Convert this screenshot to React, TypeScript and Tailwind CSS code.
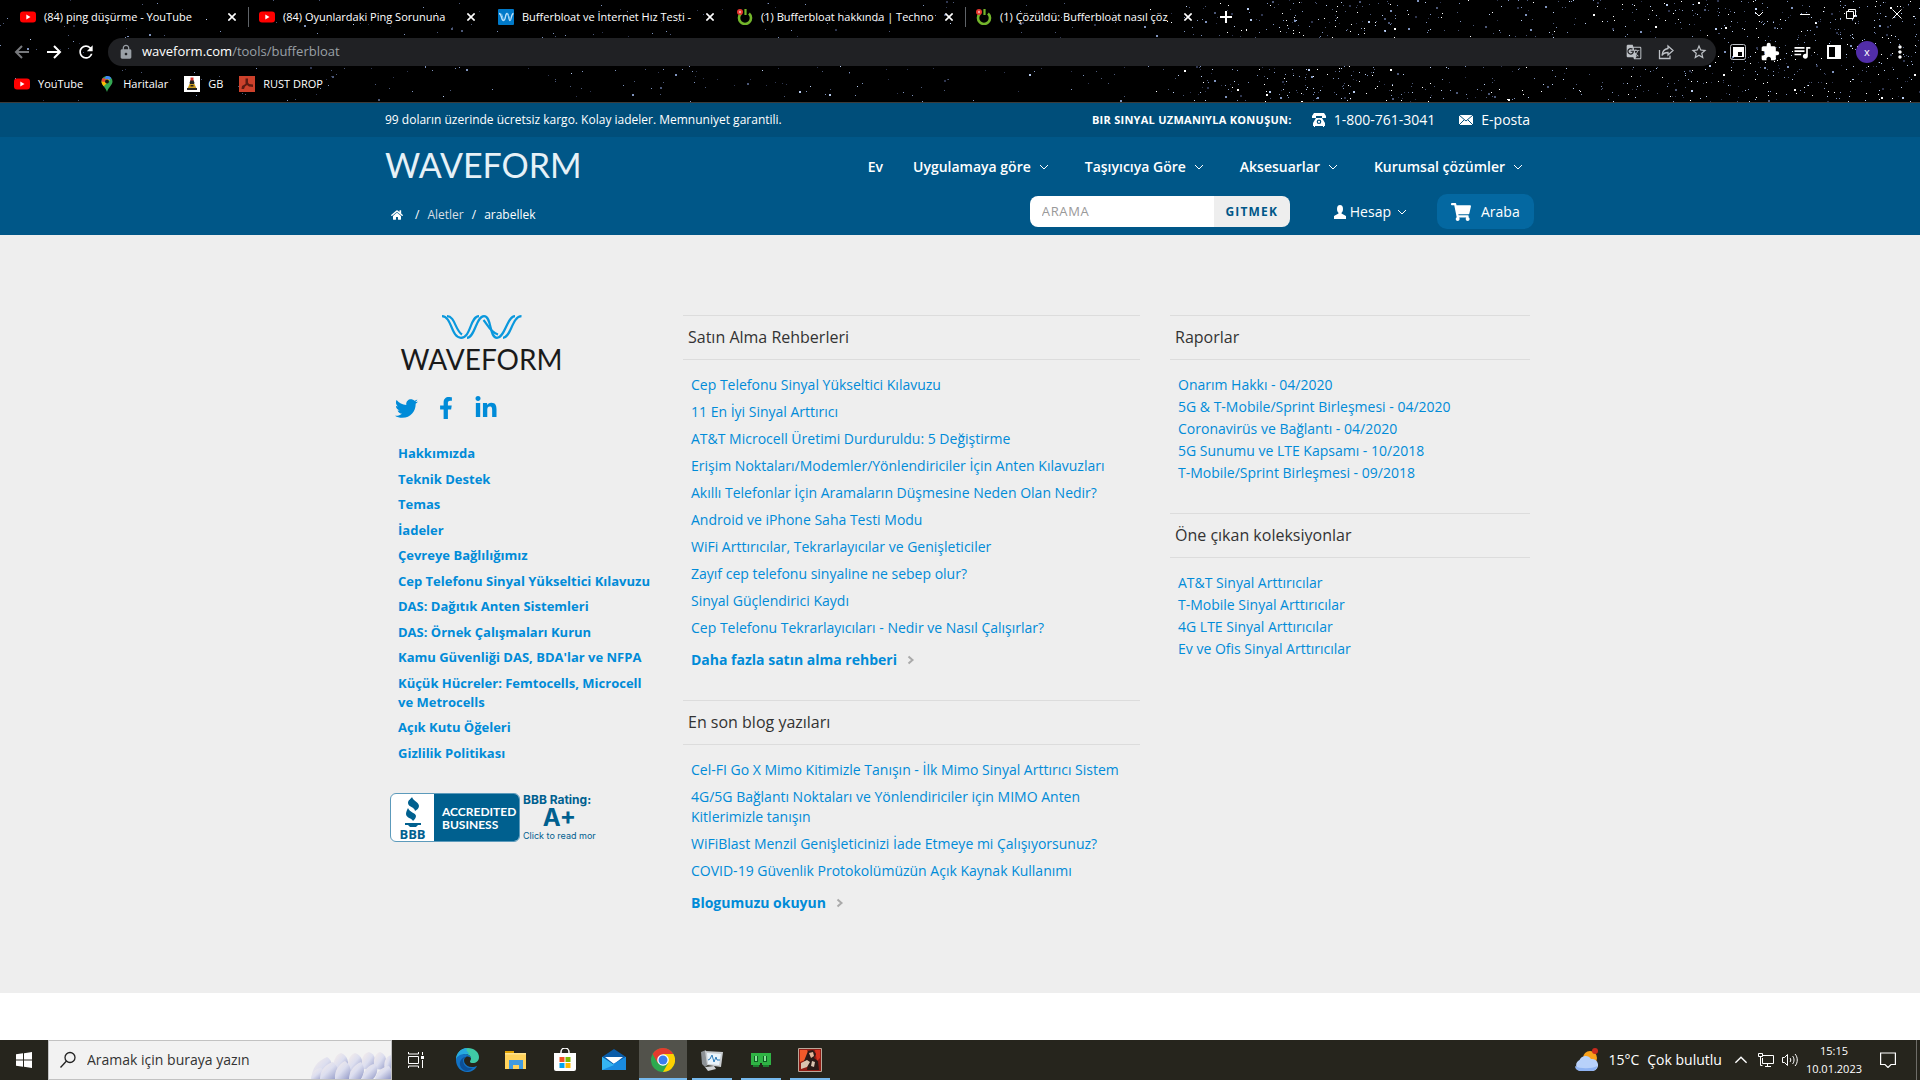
import type { ReactNode } from "react";
import clsx from "clsx";
import { FaFacebookF, FaHome, FaLinkedinIn, FaShoppingCart, FaTwitter } from "react-icons/fa";
import { MdExtension, MdGTranslate, MdLock, MdMoreVert, MdQueueMusic, MdRefresh, MdStarBorder } from "react-icons/md";

type TabIcon = "youtube" | "waveform" | "techno";

const tabs: { title: string; icon: TabIcon; divider?: boolean }[] = [
  { title: "(84) ping düşürme - YouTube", icon: "youtube", divider: true },
  { title: "(84) Oyunlardaki Ping Sorununa", icon: "youtube" },
  { title: "Bufferbloat ve İnternet Hız Testi -", icon: "waveform" },
  { title: "(1) Bufferbloat hakkında | Techno", icon: "techno", divider: true },
  { title: "(1) Çözüldü: Bufferbloat nasıl çöz", icon: "techno" },
];

const navItems = ["Uygulamaya göre", "Taşıyıcıya Göre", "Aksesuarlar", "Kurumsal çözümler"];

const companyLinks = [
  "Hakkımızda",
  "Teknik Destek",
  "Temas",
  "İadeler",
  "Çevreye Bağlılığımız",
  "Cep Telefonu Sinyal Yükseltici Kılavuzu",
  "DAS: Dağıtık Anten Sistemleri",
  "DAS: Örnek Çalışmaları Kurun",
  "Kamu Güvenliği DAS, BDA'lar ve NFPA",
  "Küçük Hücreler: Femtocells, Microcell ve Metrocells",
  "Açık Kutu Öğeleri",
  "Gizlilik Politikası",
];

const guideLinks = [
  "Cep Telefonu Sinyal Yükseltici Kılavuzu",
  "11 En İyi Sinyal Arttırıcı",
  "AT&T Microcell Üretimi Durduruldu: 5 Değiştirme",
  "Erişim Noktaları/Modemler/Yönlendiriciler İçin Anten Kılavuzları",
  "Akıllı Telefonlar İçin Aramaların Düşmesine Neden Olan Nedir?",
  "Android ve iPhone Saha Testi Modu",
  "WiFi Arttırıcılar, Tekrarlayıcılar ve Genişleticiler",
  "Zayıf cep telefonu sinyaline ne sebep olur?",
  "Sinyal Güçlendirici Kaydı",
  "Cep Telefonu Tekrarlayıcıları - Nedir ve Nasıl Çalışırlar?",
];

const blogLinks = [
  "Cel-FI Go X Mimo Kitimizle Tanışın - İlk Mimo Sinyal Arttırıcı Sistem",
  "4G/5G Bağlantı Noktaları ve Yönlendiriciler için MIMO Anten Kitlerimizle tanışın",
  "WiFiBlast Menzil Genişleticinizi İade Etmeye mi Çalışıyorsunuz?",
  "COVID-19 Güvenlik Protokolümüzün Açık Kaynak Kullanımı",
];

const reportLinks = [
  "Onarım Hakkı - 04/2020",
  "5G & T-Mobile/Sprint Birleşmesi - 04/2020",
  "Coronavirüs ve Bağlantı - 04/2020",
  "5G Sunumu ve LTE Kapsamı - 10/2018",
  "T-Mobile/Sprint Birleşmesi - 09/2018",
];

const collectionLinks = [
  "AT&T Sinyal Arttırıcılar",
  "T-Mobile Sinyal Arttırıcılar",
  "4G LTE Sinyal Arttırıcılar",
  "Ev ve Ofis Sinyal Arttırıcılar",
];

export default function App() {
  return (
    <div className="flex min-h-screen flex-col bg-white font-['Open_Sans',sans-serif]">
      <BrowserChrome />
      <SiteHeader />
      <SiteFooter />
      <div className="flex-1 bg-white" />
      <Taskbar />
    </div>
  );
}

// Browser window

// Seeded so the sky is the same on every render
function makeStars() {
  let seed = 7;
  const rand = () => {
    seed = (seed * 16807) % 2147483647;
    return seed / 2147483647;
  };
  const colors = ["#ffffff", "#b9cdf0", "#7f93bd", "#4c5878", "#2f3650"];
  const stars: { x: number; y: number; size: number; color: string }[] = [];
  for (let i = 0; i < 1500; i++) {
    const zone = rand();
    let x = rand() * 1920;
    if (zone > 0.4 && zone < 0.75) x = 1180 + rand() * 740;
    if (zone >= 0.75 && zone < 0.87) x = 1330 + (rand() + rand() + rand() - 1.5) * 110;
    if (zone >= 0.87) x = 1640 + rand() * 280;
    const bright = rand();
    const color = colors[Math.min(4, Math.floor(5 * (x < 1150 ? 0.35 + bright * 0.65 : bright)))];
    stars.push({ x: Math.floor(x), y: Math.floor(rand() * 102), size: rand() > 0.9 ? 2 : 1, color });
  }
  return stars;
}

const stars = makeStars();

function BrowserChrome() {
  return (
    <header className="relative border-b border-[#3c3b39] bg-black text-[11px] text-white">
      <svg className="absolute inset-0 h-full w-full" viewBox="0 0 1920 102" preserveAspectRatio="xMidYMid slice" aria-hidden="true">
        {stars.map((s, i) => (
          <rect key={i} x={s.x} y={s.y} width={s.size} height={s.size} fill={s.color} />
        ))}
      </svg>
      <div className="relative">
        <div className="flex h-[38px] items-start justify-between pl-5">
          <div className="flex h-[34px] items-center">
            {tabs.map((tab) => (
              <div key={tab.title} className="flex w-[239px] items-center pr-2.5">
                <Favicon icon={tab.icon} />
                <span className="ml-2 flex-1 whitespace-nowrap">{tab.title}</span>
                <button aria-label="Sekmeyi kapat" className="flex w-4 justify-center">
                  <Cross className="h-2 w-2" width={2} />
                </button>
                <span className={clsx("ml-2 h-5 w-px", tab.divider ? "bg-[#5f6368]" : "bg-transparent")} />
              </div>
            ))}
            <button aria-label="Yeni sekme" className="ml-1">
              <svg className="h-3.5 w-3.5" viewBox="0 0 14 14" stroke="currentColor" strokeWidth="2">
                <path d="M7 1v12M1 7h12" />
              </svg>
            </button>
          </div>
          <div className="flex h-7 items-center">
            <button aria-label="Sekmelerde ara" className="flex w-[46px] justify-center">
              <Chevron className="h-2.5 w-2.5" />
            </button>
            <button aria-label="Küçült" className="flex w-[46px] justify-center">
              <span className="h-px w-2.5 bg-white" />
            </button>
            <button aria-label="Geri yükle" className="flex w-[46px] justify-center">
              <svg className="h-2.5 w-2.5" viewBox="0 0 10 10" fill="none" stroke="currentColor">
                <path d="M.5 2.5h7v7h-7zM2.5 2.5v-2h7v7h-2" />
              </svg>
            </button>
            <button aria-label="Kapat" className="flex w-[46px] justify-center">
              <Cross className="h-2.5 w-2.5" width={1} />
            </button>
          </div>
        </div>

        <div className="flex h-7 items-center pr-2.5 pl-3">
          <div className="flex items-center gap-3">
            <button aria-label="Geri" className="text-[#77797c]">
              <Arrow className="h-5 w-5 rotate-180" />
            </button>
            <button aria-label="İleri">
              <Arrow className="h-5 w-5" />
            </button>
            <button aria-label="Yenile">
              <MdRefresh className="h-5 w-5" />
            </button>
          </div>
          <div className="ml-3 flex h-7 flex-1 items-center rounded-full bg-[#202124] pr-2 pl-2.5 text-[#9aa0a6]">
            <MdLock className="h-4 w-4" />
            <p className="ml-2 text-[13px]">
              <span className="text-white">waveform.com</span>/tools/bufferbloat
            </p>
            <div className="ml-auto flex items-center gap-4 text-[#bdc1c6]">
              <MdGTranslate className="h-4 w-4" />
              <svg className="h-4 w-4" viewBox="0 0 16 16" fill="none" stroke="currentColor" strokeWidth="1.3">
                <path d="M1.5 6v8.500h10.500v-3M10 2l5 4.500-5 4.500V8.500c-3 0-5 1-6 3 .3-4 2.500-6.500 6-7z" />
              </svg>
              <MdStarBorder className="h-[18px] w-[18px]" />
            </div>
          </div>
          <div className="ml-3 flex items-center gap-3">
            <svg className="h-5 w-5" viewBox="0 0 20 20" fill="none" stroke="currentColor">
              <rect x="2.500" y="2.500" width="15" height="15" rx="2" stroke="#bdc1c6" />
              <path d="M5 5h11v10H5zM10 10v4h4v-4z" fill="white" fillRule="evenodd" stroke="none" />
            </svg>
            <MdExtension className="h-5 w-5" />
            <MdQueueMusic className="h-5 w-5" />
            <svg className="h-5 w-5" viewBox="0 0 20 20" fill="currentColor">
              <path fillRule="evenodd" d="M3 3h14v14H3zM5 5v10h6V5z" />
            </svg>
            <span className="flex h-[22px] w-[22px] items-center justify-center rounded-full bg-[#512da8]">x</span>
            <MdMoreVert className="h-5 w-5" />
          </div>
        </div>

        <nav className="flex h-9 items-center pl-3.5">
          <Bookmark label="YouTube"><Favicon icon="youtube" /></Bookmark>
          <Bookmark label="Haritalar">
            <svg className="h-4 w-4" viewBox="0 0 16 16">
              <path d="M8 0a5.500 5.500 0 0 1 5.500 5.500C13.500 9 9.500 11 8 16 6.500 11 2.500 9 2.500 5.500A5.500 5.500 0 0 1 8 0z" fill="#34a853" />
              <path d="M12.300 2a5.500 5.500 0 0 0-5.300-1.900L5 4l3 3z" fill="#4285f4" />
              <path d="M2.500 5.500c0 2 1 3.300 2.200 4.700L11 4 8 3z" fill="#fbbc04" />
              <path d="M3.700 2A5.500 5.500 0 0 0 2.500 5.500L6 6l1-3z" fill="#ea4335" />
              <circle cx="8" cy="5.500" r="2" fill="#111" />
            </svg>
          </Bookmark>
          <Bookmark label="GB">
            <svg className="h-4 w-4" viewBox="0 0 16 16">
              <path d="M0 0h16v16H0z" fill="#fff" />
              <path d="M6.500 4h3l1 3-1 2h-3l-1-2z" fill="#222" />
              <path d="M6.500 1.500h3v3h-3z" fill="#d6332c" />
              <path d="M5.500 8h5l2 4.500h-9z" fill="#c99a1e" />
              <path d="M3 12h10v2H3zM6.500 9h3v1.500h-3z" fill="#222" />
            </svg>
          </Bookmark>
          <Bookmark label="RUST DROP">
            <svg className="h-4 w-4" viewBox="0 0 16 16">
              <path d="M0 0h16v16H0z" fill="#cd412b" />
              <path d="M6.500 2.500h2.500v4l1 1.500 4 .5v2.500l-4-.5-2-1.500-2 1.500-1 2.500H2.500l.5-3 3.500-2z" fill="#5c1a12" />
            </svg>
          </Bookmark>
        </nav>
      </div>
    </header>
  );
}

function Bookmark({ label, children }: { label: string; children: ReactNode }) {
  return (
    <a href="#" className="mr-4 flex items-center gap-2">
      {children}
      {label}
    </a>
  );
}

function Favicon({ icon }: { icon: TabIcon }) {
  if (icon === "youtube") {
    return (
      <svg className="h-4 w-4 shrink-0" viewBox="0 0 16 16">
        <rect y="2.500" width="16" height="11" rx="3" fill="#f00" />
        <path d="M6.300 5.500v5l4.200-2.500z" fill="#fff" />
      </svg>
    );
  }
  if (icon === "waveform") {
    return (
      <svg className="h-4 w-4 shrink-0" viewBox="0 0 16 16" fill="none">
        <rect width="16" height="16" rx="1" fill="#0079c8" />
        <path d="M1 4.500c3 0 2 7 4.500 7S7 4.500 9 4.500s1.500 7 3 7 1-7 3.500-7" stroke="#bfe3fa" strokeWidth="1.300" />
        <path d="M2.500 4.500c2.500 0 2 7 4 7M9 4.500c2 0 2 7 4 6" stroke="#7cc4f0" />
      </svg>
    );
  }
  return (
    <svg className="h-4 w-4 shrink-0" viewBox="0 0 16 16" fill="none">
      <path d="M4 4.500a6 6 0 1 0 8 0" stroke="#73b52b" strokeWidth="2.600" />
      <path d="M8.500 0v6" stroke="#73b52b" strokeWidth="2.200" />
      <circle cx="3" cy="3" r="3" fill="#e8352e" />
      <circle cx="3" cy="3" r="1.200" fill="#f5a29d" />
    </svg>
  );
}

function Cross({ className, width }: { className: string; width: number }) {
  return (
    <svg className={className} viewBox="0 0 10 10" stroke="currentColor" strokeWidth={width}>
      <path d="M.5.5l9 9M9.500.5l-9 9" />
    </svg>
  );
}

function Arrow({ className }: { className: string }) {
  return (
    <svg className={className} viewBox="0 0 20 20" fill="none" stroke="currentColor" strokeWidth="2">
      <path d="M3 10h13M10 4l6 6-6 6" />
    </svg>
  );
}

function Chevron({ className }: { className: string }) {
  return (
    <svg className={className} viewBox="0 0 10 10" fill="none" stroke="currentColor">
      <path d="M1 3l4 4 4-4" />
    </svg>
  );
}

// Site

function SiteHeader() {
  return (
    <header className="bg-[#005788] text-white">
      <div className="bg-[#004e7a]">
        <div className="mx-auto flex h-[34px] max-w-[1150px] items-center justify-between pr-[5px]">
          <p className="text-xs">99 doların üzerinde ücretsiz kargo. Kolay iadeler. Memnuniyet garantili.</p>
          <div className="flex items-center text-sm">
            <span className="text-[11px] font-bold tracking-wide">BIR SINYAL UZMANIYLA KONUŞUN:</span>
            <a href="#" className="ml-5 flex items-center gap-2">
              <svg className="h-3.5 w-3.5" viewBox="0 0 14 14" fill="currentColor">
                <path d="M2 0h10l2 3v2h-4V3H4v2H0V3z" />
                <path fillRule="evenodd" d="M4 5h6l3 5v3h-1v1h-1v-1H3v1H2v-1H1v-3zM7 6.500a2.300 2.300 0 1 0 0 4.600 2.300 2.300 0 0 0 0-4.600zm0 1.200a1.100 1.100 0 1 1 0 2.200 1.100 1.100 0 0 1 0-2.200z" />
              </svg>
              1-800-761-3041
            </a>
            <a href="#" className="ml-6 flex items-center gap-2">
              <svg className="h-3 w-3.5" viewBox="0 0 14 12">
                <path d="M0 1h14v10H0z" fill="currentColor" />
                <path d="M0 1l7 6 7-6M0 11l5-5M14 11L9 6" fill="none" stroke="#004e7a" />
              </svg>
              E-posta
            </a>
          </div>
        </div>
      </div>

      <div className="mx-auto max-w-[1150px]">
        <div className="flex h-14 items-center justify-between pr-1.5">
          <a href="#" className="font-['Lato',sans-serif] text-[34px] leading-10 text-[#e6f1f7]">WAVEFORM</a>
          <nav className="flex items-center gap-[30px] pt-1 text-sm font-semibold">
            <a href="#">Ev</a>
            {navItems.map((item) => (
              <a key={item} href="#" className="flex items-center gap-2 pr-1.5">
                {item}
                <Chevron className="h-2.5 w-2.5" />
              </a>
            ))}
          </nav>
        </div>

        <div className="flex h-[42px] items-center justify-between pr-px pb-[5px]">
          <nav className="flex items-center gap-2 pt-1.5 pl-1.5 text-xs">
            <a href="#" aria-label="Ana sayfa" className="mr-1"><FaHome className="h-3 w-3" /></a>
            <span>/</span>
            <a href="#" className="text-[#d9dfe4]">Aletler</a>
            <span>/</span>
            <span>arabellek</span>
          </nav>
          <div className="flex items-center text-sm">
            <form className="flex h-[31px] w-[260px] overflow-hidden rounded-lg">
              <input
                type="text"
                aria-label="Arama"
                placeholder="ARAMA"
                className="w-[184px] bg-white pl-3 text-[13px] tracking-wider text-[#333] placeholder:text-[#999]"
              />
              <button type="button" className="flex-1 bg-[#eee] text-xs font-bold tracking-widest text-[#005788]">
                GITMEK
              </button>
            </form>
            <a href="#" className="ml-11 flex items-center gap-1">
              <svg className="h-3.5 w-3" viewBox="0 0 12 14" fill="currentColor">
                <ellipse cx="6" cy="4" rx="3" ry="4" />
                <path d="M4.500 7h3v1.500L12 11v3H0v-3l4.500-2.500z" />
              </svg>
              Hesap
              <Chevron className="ml-0.5 h-2.5 w-2.5" />
            </a>
            <a href="#" className="ml-[30px] flex h-[35px] w-[97px] items-center gap-2.5 rounded-[10px] bg-[#0468a1] pl-3.5">
              <FaShoppingCart className="h-5 w-5" />
              Araba
            </a>
          </div>
        </div>
      </div>
    </header>
  );
}

function SiteFooter() {
  return (
    <footer className="bg-[#eee] text-[#008bd8]">
      <div className="mx-auto flex min-h-[758px] max-w-[1150px] pt-20 pr-[5px]">
        <div className="w-[298px] shrink-0">
          <div className="flex w-[193px] flex-col items-center">
            <svg className="h-[24px] w-[80px]" viewBox="0 0 80 24" fill="none" stroke="#0a98dd" strokeWidth="2.200">
              <path d="M0 1.200C10 1.200 9 22.800 19 22.800S28 1.200 37 1.200" />
              <path d="M5 1.200C13 1.200 13 15 20 19.500" />
              <path d="M25 22.800C33 22.800 34 1.200 42 1.200S47 22.800 55 22.800 65 1.200 73 1.200" />
              <path d="M41.500 5C46 10 48 17 56 19.500" />
              <path d="M61 22.800C69 22.800 70 1.200 79.500 1.200" />
            </svg>
            <span className="mt-0.5 font-['Lato',sans-serif] text-[28px] leading-9 text-[#1a1a1a]">WAVEFORM</span>
          </div>
          <div className="mt-[19px] flex items-center pl-2.5">
            <a href="#" aria-label="Twitter"><FaTwitter className="h-[23px] w-[23px]" /></a>
            <a href="#" aria-label="Facebook" className="ml-[18px]"><FaFacebookF className="h-[22px] w-5" /></a>
            <a href="#" aria-label="LinkedIn" className="ml-[18px]"><FaLinkedinIn className="h-6 w-6" /></a>
          </div>
          <ul className="mt-6 flex h-[319px] flex-col justify-between pr-7 pl-[13px] text-[13px] leading-[19px] font-bold">
            {companyLinks.map((link) => (
              <li key={link}><a href="#">{link}</a></li>
            ))}
          </ul>
          <BbbSeal />
        </div>

        <div className="w-[457px] shrink-0">
          <LinkSection title="Satın Alma Rehberleri" links={guideLinks} more="Daha fazla satın alma rehberi" />
          <LinkSection title="En son blog yazıları" links={blogLinks} more="Blogumuzu okuyun" />
        </div>

        <div className="ml-[30px] flex-1">
          <LinkSection title="Raporlar" links={reportLinks} compact />
          <LinkSection title="Öne çıkan koleksiyonlar" links={collectionLinks} compact />
        </div>
      </div>
    </footer>
  );
}

interface LinkSectionProps {
  title: string;
  links: string[];
  more?: string;
  compact?: boolean;
}

function LinkSection({ title, links, more, compact }: LinkSectionProps) {
  return (
    <section className="mb-[30px] text-sm leading-5">
      <h3 className="flex h-[45px] items-center border-y border-[#dcdcdc] pb-0.5 pl-[5px] text-base text-[#333]">{title}</h3>
      <ul className={clsx("flex flex-col pt-[15px] pl-2", compact ? "gap-0.5" : "gap-[7px]")}>
        {links.map((link) => (
          <li key={link}><a href="#">{link}</a></li>
        ))}
      </ul>
      {more && (
        <a href="#" className="mt-3 flex items-center gap-2.5 pl-2 font-bold">
          {more}
          <svg className="h-2.5 w-2" viewBox="0 0 8 10" fill="none" stroke="#aaa" strokeWidth="2">
            <path d="M1.500 1.500L5.500 5l-4 3.500" />
          </svg>
        </a>
      )}
    </section>
  );
}

function BbbSeal() {
  return (
    <a href="#" className="mt-[30px] flex pl-[5px] text-[#00608f]">
      <div className="flex h-[49px] w-[130px] overflow-hidden rounded-md border border-[#5c9abb] bg-white">
        <div className="flex w-[43px] flex-col items-center pt-[3px]">
          <svg className="h-[31px] w-[18px]" viewBox="0 0 18 31" fill="currentColor">
            <path d="M8 0c1 4 7 5 7 9 0 2-2 4-4 5 0-4-7-4-7-8 0-3 3-4 4-6zM4 11c1 4 8 5 8 8 0 2-2 4-3 5-1-3-7-3-7-7 0-2 1-4 2-6z" />
            <path d="M1 26h16v2h-3l-2 2H6l-2-2H1z" />
          </svg>
          <span className="text-[13px] leading-[13px] font-bold">BBB</span>
        </div>
        <div className="flex-1 bg-[#00608f] pt-[11px] pl-2 font-['Lato',sans-serif] text-xs leading-[13px] font-bold text-white">
          ACCREDITED<br />BUSINESS
        </div>
      </div>
      <div className="ml-[3px] font-['Inter',sans-serif]">
        <p className="text-xs leading-[14px] font-bold whitespace-nowrap">BBB Rating:</p>
        <p className="text-center text-2xl leading-[22px] font-bold">A+</p>
        <p className="text-[9px] leading-[13px] whitespace-nowrap">Click to read mor</p>
      </div>
    </a>
  );
}

// Windows taskbar

function Taskbar() {
  return (
    <footer className="flex h-10 items-center justify-between bg-[#26251d] text-white">
      <div className="flex h-10 items-center">
        <button aria-label="Başlat" className="flex h-10 w-12 items-center justify-center">
          <svg className="h-4 w-4" viewBox="0 0 16 16" fill="currentColor">
            <path d="M0 2.300l7-1v6.200H0zM8 1.200L16 0v7.500H8zM0 8.500h7v6.200l-7-1zM8 8.500h8V16l-8-1.200z" />
          </svg>
        </button>
        <label className="relative flex h-10 w-[344px] items-center border border-[#c2c2c2] bg-[#f2f2f2] pl-2.5 text-[#222]">
          <svg className="h-[18px] w-[18px]" viewBox="0 0 18 18" fill="none" stroke="currentColor" strokeWidth="1.300">
            <circle cx="11" cy="6.500" r="5" />
            <path d="M7.500 10L1.500 16.500" />
          </svg>
          <input
            type="text"
            placeholder="Aramak için buraya yazın"
            className="ml-2.5 w-[220px] bg-transparent text-sm placeholder:text-[#333]"
          />
          <FlowerArt />
        </label>
        <TaskButton label="Görev görünümü">
          <svg className="h-[18px] w-[18px]" viewBox="0 0 18 18" fill="none" stroke="currentColor">
            <path d="M1.500 5.500h10v7h-10zM1.500 1v2h10V1M1.500 17v-2h10v2M15.500 1v3M15.500 9v8" />
            <path d="M14 5h3v3h-3z" fill="currentColor" stroke="none" />
          </svg>
        </TaskButton>
        <div className="ml-0.5 flex">
          <TaskButton label="Edge">
            <svg className="h-6 w-6" viewBox="0 0 24 24">
              <path d="M1 12C1 5 6 0 13 0c6 0 11 4 11 9 0 4-3 6-6 6-2 0-3-.5-3-1.500 0-.8 1-1.200 1-3C16 8 13 6 10 6 5 6 1 9 1 12z" fill="#3fc9a5" />
              <path d="M1 12C1 5 6 0 12 0c-2 3 2 4 2 6-5-1-9 1-9 6z" fill="#27a9e1" />
              <path d="M1 12c0-3 4-6 9-6 3 0 6 2 6 4.500-1-1.500-3-2.500-5-1.500-4 2-2 10 6 10 2 0 4-.5 5-1-2 4-6 6-10 6C6 24 1 19 1 12z" fill="#1272c4" />
              <path d="M8 12c0 6 5 9 10 8-2 2-4 3-7 3-4-1-7-5-6-9 1-3 3-5 6-5-2 1-3 2-3 3z" fill="#0c4f97" />
            </svg>
          </TaskButton>
          <TaskButton label="Dosya Gezgini">
            <svg className="h-6 w-6" viewBox="0 0 24 24">
              <path d="M1 3h9v3H1z" fill="#e0a100" />
              <path d="M1 5h21v16H1z" fill="#ffd35c" />
              <path d="M1 5h21v1.500H1z" fill="#ffe38f" />
              <path d="M5 12h14v9h-4v-4H9v4H5z" fill="#3f9ae0" />
            </svg>
          </TaskButton>
          <TaskButton label="Microsoft Store">
            <svg className="h-6 w-6" viewBox="0 0 24 24">
              <path d="M8 6V4a4 4 0 0 1 8 0v2" fill="none" stroke="#fff" strokeWidth="1.500" />
              <path d="M1 5h22v16a2 2 0 0 1-2 2H3a2 2 0 0 1-2-2z" fill="#fff" />
              <path d="M6.500 9h5v5h-5z" fill="#f25022" />
              <path d="M12.500 9h5v5h-5z" fill="#7fba00" />
              <path d="M6.500 15h5v5h-5z" fill="#00a4ef" />
              <path d="M12.500 15h5v5h-5z" fill="#ffb900" />
            </svg>
          </TaskButton>
          <TaskButton label="Posta">
            <svg className="h-6 w-6" viewBox="0 0 24 24">
              <path d="M0 9l12-8 12 8v13H0z" fill="#0a5ca8" />
              <path d="M0 9l12 8 12-8v13H0z" fill="#2aa8ea" />
              <path d="M3 9h18l-9 7z" fill="#fff" />
              <path d="M0 22l24-13v13z" fill="#1a8be0" />
              <path d="M0 9l12 8-12 5z" fill="#35b5f2" />
            </svg>
          </TaskButton>
          <TaskButton label="Chrome" active running>
            <svg className="h-6 w-6" viewBox="0 0 24 24">
              <circle cx="12" cy="12" r="12" fill="#2da94f" />
              <path d="M1.600 6A12 12 0 0 1 22.400 6H12l-5.200 9z" fill="#e33b2e" />
              <path d="M22.400 6A12 12 0 0 1 12 24l5.200-9L12 6z" fill="#fdd001" />
              <circle cx="12" cy="12" r="5.800" fill="#fff" />
              <circle cx="12" cy="12" r="4.500" fill="#3b7ded" />
            </svg>
          </TaskButton>
          <TaskButton label="Görev Yöneticisi" running>
            <svg className="h-6 w-6" viewBox="0 0 24 24">
              <path d="M1 4l5-2 2 15-3 2-3-3z" fill="#8d9296" />
              <path d="M5 3l18 1-2 15-14-2z" fill="#c9cdd0" />
              <path d="M7 5l14 1-2 11-11-1z" fill="#eaf4fb" />
              <path d="M8 12l2-1 2-4 2 7 2-5 1 3 3 0" fill="none" stroke="#2a7ab8" />
              <path d="M5 19l9-1 2 3-8 2z" fill="#d0d3d5" />
            </svg>
          </TaskButton>
          <TaskButton label="Bellek" running>
            <svg className="h-6 w-6" viewBox="0 0 24 24">
              <path d="M2 5h20v12h-9v-2h-2v2H2z" fill="#2fb344" />
              <path d="M5 8h4v6H5zM14 8h4v6h-4z" fill="#0d5c22" />
              <path d="M6 8h2v5H6zM15 8h2v5h-2z" fill="#8ae29a" />
              <path d="M4 17h6v2H4zM14 17h6v2h-6z" fill="#1d7f30" />
            </svg>
          </TaskButton>
          <TaskButton label="Oyun" running>
            <svg className="h-6 w-6" viewBox="0 0 24 24">
              <path d="M.5.5h23v23H.5z" fill="#8f1c14" stroke="#b9a89a" />
              <path d="M2 2h7l2 5-4 5-5 2z" fill="#f0592a" />
              <path d="M17 2h5v8l-3 3z" fill="#d8331f" />
              <path d="M10 3l5-1 3 4-2 4 4 3 1 9H9l1-7-4-2z" fill="#2b1a17" />
              <path d="M11 5l4-1 1 4-3 2z" fill="#e0b59a" />
              <path d="M3 15l6-3 3 2-3 5-6 2zM14 13l3 1-1 5-3-1z" fill="#d9c3b0" />
            </svg>
          </TaskButton>
        </div>
      </div>

      <div className="flex h-10 items-center">
        <svg className="h-6 w-6" viewBox="0 0 24 24">
          <circle cx="16" cy="10" r="7" fill="#f9a11b" />
          <path d="M6 23a6 6 0 0 1-.5-11A6.500 6.500 0 0 1 17 11a6 6 0 0 1 2 12z" fill="#b8d1fa" />
          <path d="M1 18c4 3 18 3 22 0a5 5 0 0 1-5 5H6a5 5 0 0 1-5-5z" fill="#8fb3f2" />
          <circle cx="21" cy="3" r="3" fill="#c92a1e" />
        </svg>
        <span className="ml-2.5 text-sm">15°C</span>
        <span className="ml-2 text-sm">Çok bulutlu</span>
        <Chevron className="ml-3 h-3.5 w-3.5 rotate-180" />
        <svg className="ml-2.5 h-4 w-4" viewBox="0 0 16 16" fill="none" stroke="currentColor">
          <path d="M5 3.500h10.500v8H4.500V6M7 14.500h6M9.500 11.500v3M.5 1.500h4v3h-4zM2.500 4.500v9h2" />
        </svg>
        <svg className="ml-2 h-4 w-4" viewBox="0 0 16 16" fill="none" stroke="currentColor">
          <path d="M.5 5.500h2l3-3v11l-3-3h-2zM8 6c1 1 1 3 0 4M10.500 4c2 2 2 6 0 8M13 2c3 3 3 9 0 12" />
        </svg>
        <div className="ml-2 text-center text-[11px] leading-[18px]">
          <p>15:15</p>
          <p>10.01.2023</p>
        </div>
        <svg className="ml-[18px] h-4 w-4" viewBox="0 0 16 16" fill="none" stroke="currentColor" strokeWidth="1.200">
          <path d="M.6 1h14.800v11.500H11L8 15.500l-3-3H.6z" />
        </svg>
        <span className="mr-[3px] ml-5 h-10 w-px bg-[#6e6d68]" />
      </div>
    </footer>
  );
}

function TaskButton({ label, active, running, children }: { label: string; active?: boolean; running?: boolean; children: ReactNode }) {
  return (
    <button
      aria-label={label}
      className={clsx("relative mr-px flex h-10 w-12 items-center justify-center", active && "bg-[#52524b]")}
    >
      {children}
      {running && (
        <span className={clsx("absolute bottom-0 h-0.5 bg-[#76b9ed]", active ? "inset-x-0" : "inset-x-1")} />
      )}
    </button>
  );
}

// Petals that grow out of the right end of the search box
function FlowerArt() {
  return (
    <svg className="absolute right-0 bottom-0 h-7 w-20" viewBox="0 0 80 28">
      <defs>
        <linearGradient id="petal" x1="0" y1="0" x2="1" y2="1">
          <stop offset="0" stopColor="#f8efea" />
          <stop offset="0.500" stopColor="#dcdeef" />
          <stop offset="1" stopColor="#9097c6" />
        </linearGradient>
      </defs>
      <g fill="url(#petal)">
        <path d="M24 20c-4-8 1-17 6-18 6 2 9 9 6 18z" />
        <path d="M38 20c-3-8 0-16 6-18 7 2 9 9 6 18z" />
        <path d="M52 18C49 9 52 2 58 1c6 2 8 8 4 18z" />
        <path d="M64 18c-3-8 0-16 5-17 6 2 8 9 5 18z" />
        <path d="M74 20c-2-8 0-14 6-16v18z" />
        <path d="M1 28C0 18 6 10 16 6c6 3 6 12 2 22z" />
        <path d="M0 28c0-6 4-10 10-11 5 3 5 7 3 11z" />
        <path d="M9 28c0-8 5-15 13-17 6 5 6 11 3 17z" />
        <path d="M24 28c-1-8 4-15 10-18 6 4 7 11 4 18z" />
        <path d="M38 28c0-8 6-15 12-17 4 5 4 11 0 17z" />
        <path d="M51 28c1-8 7-15 13-15 4 5 2 11-2 15z" />
        <path d="M64 28c1-7 7-12 14-13l2 3v10z" />
      </g>
    </svg>
  );
}
